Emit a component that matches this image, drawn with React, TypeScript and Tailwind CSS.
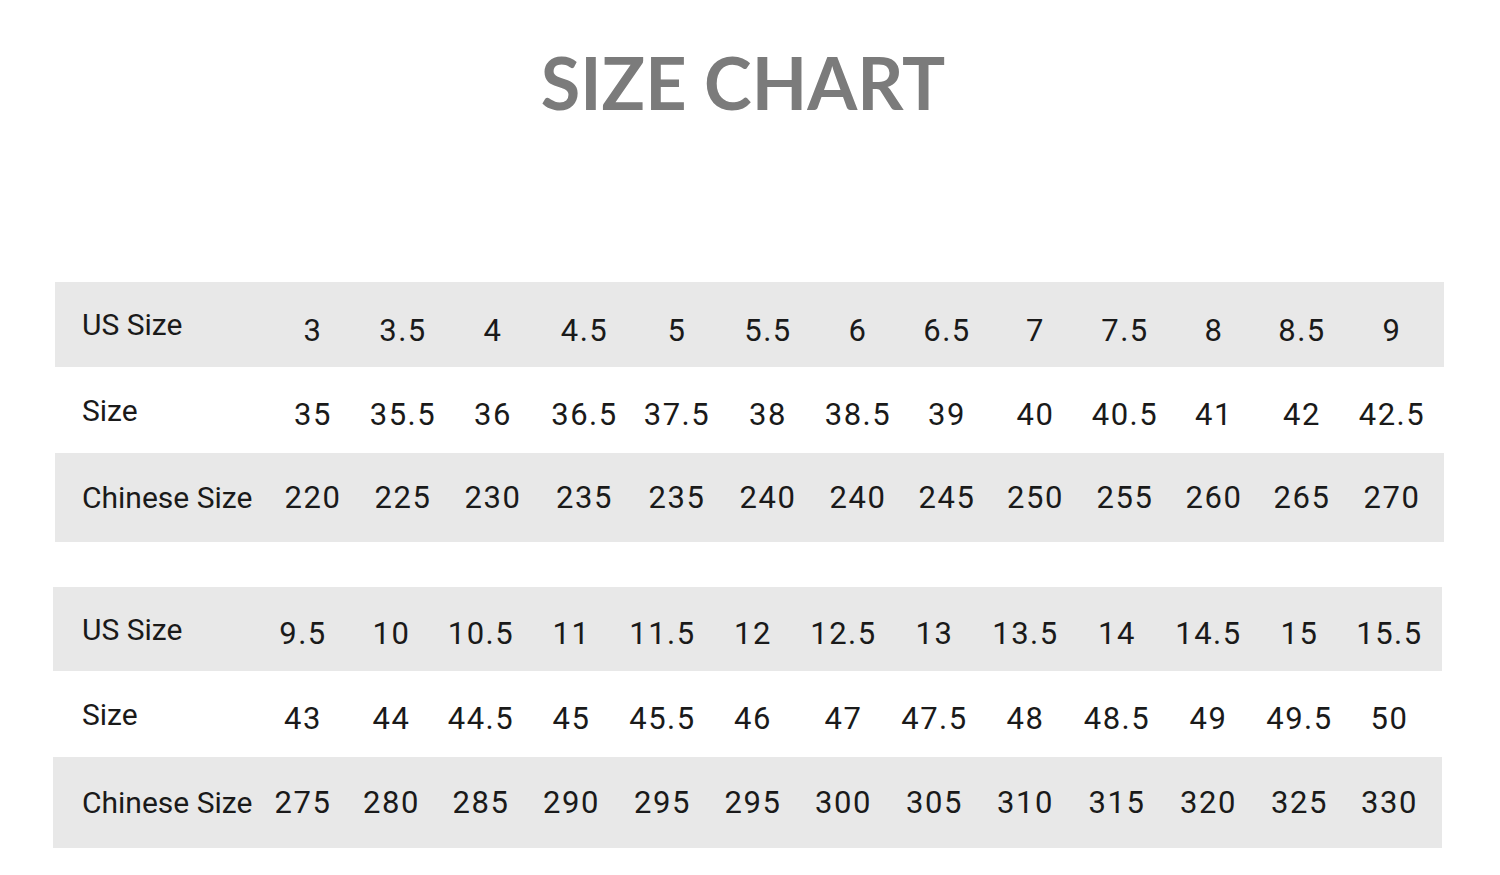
import React from "react";

const t1 = {
  cols: "grid-cols-[213px_90px_90px_90px_93px_92px_90px_90px_88px_89px_90px_88px_88px_92px_1fr]",
  rows: [
    { label: "US Size", vals: ["3", "3.5", "4", "4.5", "5", "5.5", "6", "6.5", "7", "7.5", "8", "8.5", "9"], h: "h-[85px]", grey: true, shift: "pt-[14px]" },
    { label: "Size", vals: ["35", "35.5", "36", "36.5", "37.5", "38", "38.5", "39", "40", "40.5", "41", "42", "42.5"], h: "h-[86px]", grey: false, shift: "pt-[10px]" },
    { label: "Chinese Size", vals: ["220", "225", "230", "235", "235", "240", "240", "245", "250", "255", "260", "265", "270"], h: "h-[89px]", grey: true, shift: "pt-[2px]" },
  ],
};

const t2 = {
  cols: "grid-cols-[206px_88px_89px_90px_91px_91px_90px_91px_91px_91px_92px_91px_91px_89px_1fr]",
  rows: [
    { label: "US Size", vals: ["9.5", "10", "10.5", "11", "11.5", "12", "12.5", "13", "13.5", "14", "14.5", "15", "15.5"], h: "h-[84px]", grey: true, shift: "pt-[11px]" },
    { label: "Size", vals: ["43", "44", "44.5", "45", "45.5", "46", "47", "47.5", "48", "48.5", "49", "49.5", "50"], h: "h-[86px]", grey: false, shift: "pt-[10px]" },
    { label: "Chinese Size", vals: ["275", "280", "285", "290", "295", "295", "300", "305", "310", "315", "320", "325", "330"], h: "h-[91px]", grey: true, shift: "pt-[2px]" },
  ],
};

function Table({ data, ml, pl }: { data: typeof t1; ml: string; pl: string }) {
  return (
    <div className={`${ml} w-[1389px] flex flex-col`}>
      {data.rows.map((r, i) => (
        <div
          key={i}
          className={`grid ${data.cols} ${r.h} items-center ${r.grey ? "bg-[#e8e8e8]" : "bg-white"}`}
        >
          <div className={`${pl} whitespace-nowrap text-[30px] text-[#1a1a1a]`}>{r.label}</div>
          {r.vals.map((v, j) => (
            <div
              key={j}
              className={`text-center whitespace-nowrap text-[31px] tracking-[1.5px] text-[#1a1a1a] ${r.shift}`}
            >
              {v}
            </div>
          ))}
          <div />
        </div>
      ))}
    </div>
  );
}

export default function App() {
  return (
    <div className="w-[1500px] h-[875px] bg-white overflow-hidden font-['Roboto',sans-serif]">
      <div className="h-[282px] pt-[39px] flex justify-center">
        <h1 className="font-['Lato',sans-serif] font-bold text-[72px] leading-[86px] text-[#7b7b7b] ml-[-14px]">
          SIZE CHART
        </h1>
      </div>
      <Table data={t1} ml="ml-[55px]" pl="pl-[27px]" />
      <div className="h-[45px]" />
      <Table data={t2} ml="ml-[53px]" pl="pl-[29px]" />
    </div>
  );
}
